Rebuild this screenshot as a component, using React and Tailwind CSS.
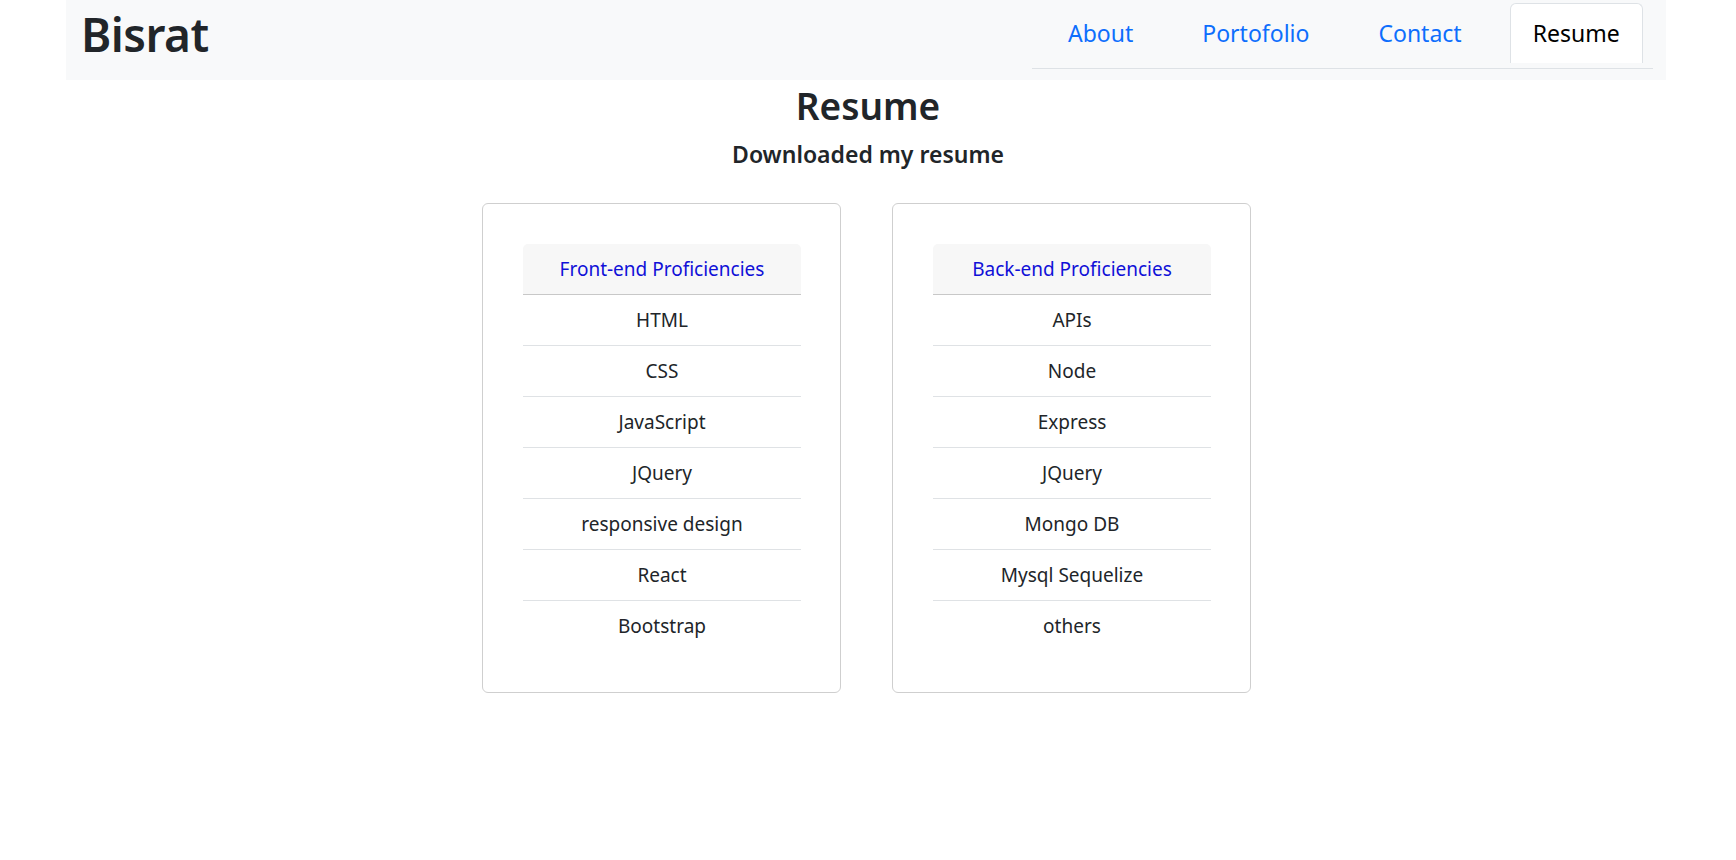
import React from "react";

const frontEnd = ["HTML", "CSS", "JavaScript", "JQuery", "responsive design", "React", "Bootstrap"];
const backEnd = ["APIs", "Node", "Express", "JQuery", "Mongo DB", "Mysql Sequelize", "others"];

const navItems = ["About", "Portofolio", "Contact"];

function SkillCard({ title, items }) {
  return (
    <div className="w-[359px] rounded-[6px] border border-[#cfcfcf] bg-white p-10">
      <ul className="w-[278px]">
        <li className="flex h-[51px] items-center justify-center rounded-t-[5px] border-b border-[#c8c8c8] bg-[#f7f7f7] text-[19px] text-[#1010d8]">
          {title}
        </li>
        {items.map((item, i) => (
          <li
            key={item + i}
            className={`flex h-[51px] items-center justify-center text-[19px] text-[#212529] ${
              i < items.length - 1 ? "border-b border-[#dfe2e5]" : ""
            }`}
          >
            {item}
          </li>
        ))}
      </ul>
    </div>
  );
}

export default function App() {
  return (
    <div className="min-h-[860px] bg-white font-['Noto_Sans',sans-serif] text-[#212529]">
      {/* Navbar */}
      <header className="ml-[66px] flex h-[80px] w-[1600px] items-start justify-between bg-[#f8f9fa]">
        <h1 className="ml-[15px] mt-[2px] text-[46px] font-semibold leading-[64px] tracking-[-0.5px] text-[#212529]">
          Bisrat
        </h1>
        <nav className="mr-[13px] mt-[3px] flex h-[66px] w-[621px] items-start border-b border-[#dee2e6] pl-[10px]">
          {navItems.map((label) => (
            <a
              key={label}
              href="#"
              className="mr-[17px] flex h-[60px] items-center px-[26px] text-[23px] text-[#0d6efd]"
            >
              {label}
            </a>
          ))}
          <a
            href="#"
            className="ml-[5px] flex h-[60px] items-center rounded-t-[6px] border border-b-0 border-[#dee2e6] bg-white px-[22px] text-[23px] text-black"
          >
            Resume
          </a>
        </nav>
      </header>

      {/* Content */}
      <main className="flex flex-col items-center">
        <h2 className="mt-[1px] text-[37px] font-semibold leading-[50px]">Resume</h2>
        <h4 className="mt-[8px] text-[23px] font-semibold leading-[30px]">Downloaded my resume</h4>
        <div className="mt-[34px] flex gap-[51px] pr-[3px]">
          <SkillCard title="Front-end Proficiencies" items={frontEnd} />
          <SkillCard title="Back-end Proficiencies" items={backEnd} />
        </div>
      </main>
    </div>
  );
}
